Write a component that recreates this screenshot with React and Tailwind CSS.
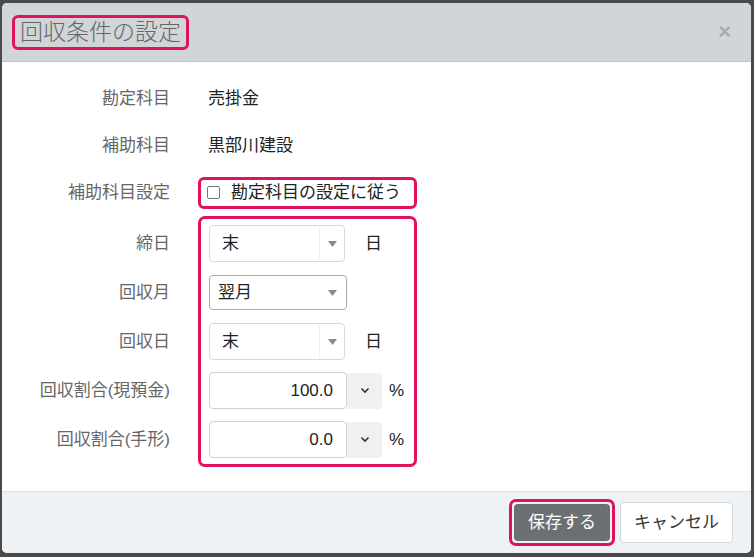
import React from 'react';

const font = { fontFamily: '"Liberation Sans", "Noto Sans CJK JP", sans-serif' };

const Arrow = () => (
  <svg width="9" height="6" viewBox="0 0 9 6" className="shrink-0">
    <path d="M0 0h9L4.5 6z" fill="#8a8a8a" />
  </svg>
);

const Chevron = () => (
  <svg width="10" height="7" viewBox="0 0 10 7">
    <path d="M1.5 1.5L5 5l3.5-3.5" fill="none" stroke="#333" strokeWidth="1.6" />
  </svg>
);

const Select = ({ value, divider }) => (
  <div className="flex h-[37px] w-[136px] items-center rounded-[4px] border border-[#d9d9d9] bg-white">
    <span className="flex-1 pl-[12px] text-[17px] text-[#222]">{value}</span>
    {divider && <span className="h-[33px] w-px bg-[#f0f0f0]" />}
    <span className="flex w-[24px] justify-center">
      <Arrow />
    </span>
  </div>
);

const Rate = ({ value }) => (
  <div className="flex items-center">
    <div className="flex h-[37px] w-[138px] items-center justify-end rounded-[4px] border border-[#d0d0d0] bg-white pr-[13px] text-[17px] text-[#222]">
      {value}
    </div>
    <div className="flex h-[36px] w-[35px] items-center justify-center rounded-r-[4px] bg-[#f0f0f0]">
      <Chevron />
    </div>
    <span className="ml-[7px] text-[17px] text-[#222]">%</span>
  </div>
);

const Label = ({ children }) => (
  <div className="w-[168px] text-right text-[17px] text-[#666]">{children}</div>
);

export default function App() {
  return (
    <div style={font} className="h-[557px] w-[754px] overflow-hidden bg-[#4a4a4a] pl-[2px] pt-[3px]">
      <div className="flex h-[550px] w-[749px] flex-col overflow-hidden rounded-[5px] bg-white">
        {/* header */}
        <div className="flex h-[59px] shrink-0 items-center justify-between border-b border-[#c3c7cb] bg-[#d1d5d8] pl-[10px] pr-[20px]">
          <div className="flex h-[35px] items-center rounded-[6px] border-[3px] border-[#e0115f] px-[5px]">
            <span className="text-[23px] font-light leading-none text-[#666]">回収条件の設定</span>
          </div>
          <span className="text-[22px] font-bold leading-none text-[#a7abaf]">×</span>
        </div>

        {/* body */}
        <div className="flex-1 pt-[14px]">
          <div className="flex h-[46px] items-center">
            <Label>勘定科目</Label>
            <span className="ml-[38px] text-[17px] text-[#222]">売掛金</span>
          </div>
          <div className="flex h-[47px] items-center">
            <Label>補助科目</Label>
            <span className="ml-[38px] text-[17px] text-[#222]">黒部川建設</span>
          </div>
          <div className="flex h-[47px] items-center">
            <Label>補助科目設定</Label>
            <div className="ml-[28px] flex h-[32px] w-[219px] items-center rounded-[6px] border-[3px] border-[#e0115f] pl-[6px]">
              <span className="h-[13px] w-[13px] rounded-[2px] border border-[#777] bg-white" />
              <span className="ml-[11px] text-[17px] text-[#222]">勘定科目の設定に従う</span>
            </div>
          </div>

          <div className="flex">
            <div className="pt-[3px]">
              {['締日', '回収月', '回収日', '回収割合(現預金)', '回収割合(手形)'].map((l) => (
                <div key={l} className="flex h-[49px] items-center">
                  <Label>{l}</Label>
                </div>
              ))}
            </div>
            <div className="ml-[28px] w-[219px] rounded-[7px] border-[3px] border-[#e0115f] pl-[8px]">
              <div className="flex h-[49px] items-center">
                <Select value="末" divider />
                <span className="ml-[20px] text-[17px] text-[#222]">日</span>
              </div>
              <div className="flex h-[49px] items-center">
                <div className="flex h-[35px] w-[138px] items-center rounded-[4px] border border-[#a9a9a9] bg-white">
                  <span className="flex-1 pl-[8px] text-[17px] text-[#222]">翌月</span>
                  <span className="flex w-[28px] justify-center">
                    <Arrow />
                  </span>
                </div>
              </div>
              <div className="flex h-[49px] items-center">
                <Select value="末" divider />
                <span className="ml-[20px] text-[17px] text-[#222]">日</span>
              </div>
              <div className="flex h-[49px] items-center">
                <Rate value="100.0" />
              </div>
              <div className="flex h-[49px] items-center">
                <Rate value="0.0" />
              </div>
            </div>
          </div>
        </div>

        {/* footer */}
        <div className="flex h-[62px] shrink-0 items-center justify-end gap-[5px] border-t border-[#dde1e5] bg-[#eef2f5] pr-[18px]">
          <div className="rounded-[7px] border-[3px] border-[#e0115f] p-[2px]">
            <div className="flex h-[37px] w-[96px] items-center justify-center rounded-[4px] bg-[#6c7073] text-[17px] text-white">
              保存する
            </div>
          </div>
          <div className="flex h-[41px] w-[113px] items-center justify-center rounded-[4px] border border-[#d5d8db] bg-white text-[17px] text-[#333]">
            キャンセル
          </div>
        </div>
      </div>
    </div>
  );
}
